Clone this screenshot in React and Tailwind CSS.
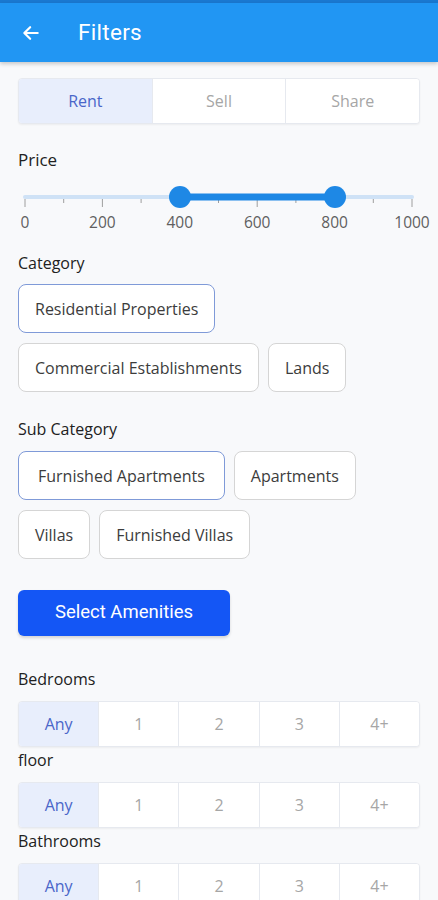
import React, { useState } from 'react';

const TIPOS = ['Rent', 'Sell', 'Share'];
const CANTIDADES = ['Any', '1', '2', '3', '4+'];
const MARCAS = [0, 200, 400, 600, 800, 1000];

const Segmentado = ({ opciones, activo = 0 }) => (
    <div className="flex h-[46px] rounded-[4px] border border-[#e6e9ef] bg-white shadow-[0_1px_2px_rgba(0,0,0,0.05)] overflow-hidden">
        {opciones.map((op, i) => (
            <div
                key={op}
                className={`flex-1 flex items-center justify-center text-[16px] ${i > 0 ? 'border-l border-[#e6e9ef]' : ''} ${i === activo ? 'bg-[#e8eefc] text-[#4a66c9]' : 'bg-white text-[#a6a6a6]'}`}
            >
                {op}
            </div>
        ))}
    </div>
);

const Chip = ({ texto, activo, ancho = 'px-[16px]' }) => (
    <div className={`h-[49px] ${ancho} flex items-center rounded-[8px] border bg-white text-[16px] text-[#3c3c3c] ${activo ? 'border-[#7f9ad8]' : 'border-[#d5d5d5]'}`}>
        {texto}
    </div>
);

const Deslizador = () => {
    const x0 = 25, x1 = 412;
    const paso = (x1 - x0) / 10;
    return (
        <div>
            <svg width="438" height="30" className="block">
                <line x1={x0} y1="16" x2={x1} y2="16" stroke="#cfe2f6" strokeWidth="4" strokeLinecap="round" />
                {Array.from({ length: 11 }).map((_, i) => (
                    <line key={i} x1={x0 + i * paso} y1="18" x2={x0 + i * paso} y2={i % 2 === 0 ? 26 : 22} stroke="#9e9e9e" strokeWidth="1" />
                ))}
                <line x1="180" y1="16" x2="335" y2="16" stroke="#1e88e5" strokeWidth="7" />
                <circle cx="180" cy="16" r="11" fill="#1e88e5" />
                <circle cx="335" cy="16" r="11" fill="#1e88e5" />
            </svg>
            <div className="relative h-[26px] text-[15.5px] text-[#5f5f5f]">
                {MARCAS.map((m, i) => (
                    <span
                        key={m}
                        className="absolute top-0 -translate-x-1/2"
                        style={{ left: x0 + i * paso * 2 }}
                    >
                        {m}
                    </span>
                ))}
            </div>
        </div>
    );
};

const App = () => {
    const [tipo] = useState(0);

    return (
        <div className="w-[438px] h-[900px] overflow-hidden bg-[#f8f9fb] font-['Open_Sans','Noto_Sans',sans-serif]">
            <div className="h-[3px] bg-[#1a78d0]"></div>
            <div className="h-[59px] bg-[#2196f3] flex items-center shadow-[0_2px_4px_rgba(0,0,0,0.2)] relative z-10">
                <svg width="20" height="20" viewBox="0 0 24 24" className="ml-[21px]" fill="none" stroke="white" strokeWidth="2.6" strokeLinecap="round" strokeLinejoin="round">
                    <path d="M20 12H5" />
                    <path d="M11 5l-7 7 7 7" />
                </svg>
                <h1 className="ml-[37px] text-white text-[22.5px] font-['Roboto',sans-serif] tracking-[0.3px]">Filters</h1>
            </div>

            <div className="px-[18px]">
                <div className="pt-[16px]">
                    <Segmentado opciones={TIPOS} activo={tipo} />
                </div>

                <h2 className="mt-[24px] text-[17px] text-[#212121] leading-[24px]">Price</h2>
            </div>

            <div className="mt-[9px]">
                <Deslizador />
            </div>

            <div className="px-[18px]">
                <h3 className="mt-[15px] text-[16px] text-[#212121] leading-[22px]">Category</h3>
                <div className="mt-[10px] flex flex-col gap-[10px]">
                    <div className="flex gap-[9px]">
                        <Chip texto="Residential Properties" activo />
                    </div>
                    <div className="flex gap-[9px]">
                        <Chip texto="Commercial Establishments" />
                        <Chip texto="Lands" />
                    </div>
                </div>

                <h3 className="mt-[26px] text-[16px] text-[#212121] leading-[22px]">Sub Category</h3>
                <div className="mt-[11px] flex flex-col gap-[10px]">
                    <div className="flex gap-[9px]">
                        <Chip texto="Furnished Apartments" activo ancho="px-[19px]" />
                        <Chip texto="Apartments" />
                    </div>
                    <div className="flex gap-[9px]">
                        <Chip texto="Villas" />
                        <Chip texto="Furnished Villas" />
                    </div>
                </div>

                <button className="mt-[31px] w-[212px] h-[46px] rounded-[6px] bg-[#1456f5] text-white text-[18.5px] font-['Roboto',sans-serif] shadow-[0_2px_3px_rgba(0,0,0,0.15)]">
                    Select Amenities
                </button>

                <h3 className="mt-[32px] text-[16px] text-[#212121] leading-[22px]">Bedrooms</h3>
                <div className="mt-[11px]">
                    <Segmentado opciones={CANTIDADES} />
                </div>

                <h3 className="mt-[2px] text-[16px] text-[#212121] leading-[22px]">floor</h3>
                <div className="mt-[11px]">
                    <Segmentado opciones={CANTIDADES} />
                </div>

                <h3 className="mt-[2px] text-[16px] text-[#212121] leading-[22px]">Bathrooms</h3>
                <div className="mt-[11px]">
                    <Segmentado opciones={CANTIDADES} />
                </div>
            </div>
        </div>
    );
};

export default App;
